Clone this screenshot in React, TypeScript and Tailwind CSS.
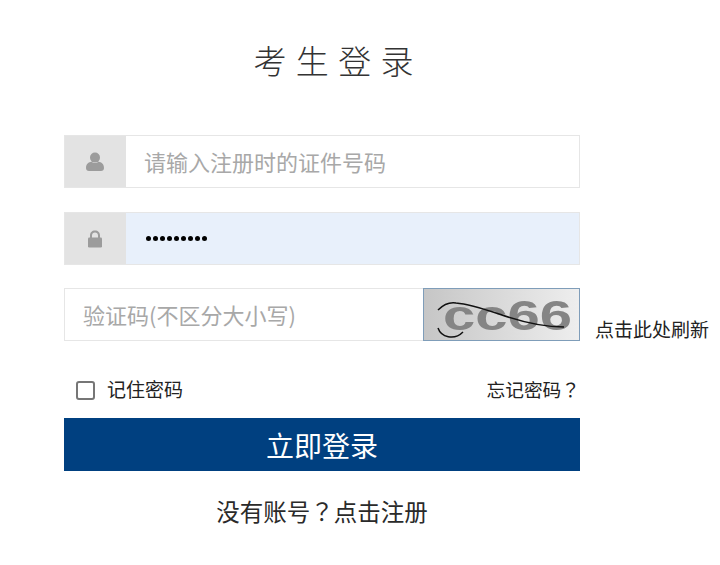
import React from 'react';

function UserIcon() {
  return (
    <svg width="20" height="20" viewBox="0 0 20 20" fill="#9c9c9c">
      <ellipse cx="10" cy="5.6" rx="5" ry="5" />
      <path d="M1 16c0-4 2.600-6 5.500-6.200 1 .9 2.200 1.300 3.500 1.300s2.500-.4 3.500-1.300C16.400 10 19 12 19 16c0 2-1.200 3-3 3H4c-1.800 0-3-1-3-3z" />
    </svg>
  );
}

function LockIcon() {
  return (
    <svg width="16" height="18" viewBox="0 0 16 18" fill="#9c9c9c">
      <path d="M3 8V5.500C3 2.500 5 .5 8 .5s5 2 5 5V8h-2V5.500C11 3.700 9.800 2.500 8 2.500S5 3.700 5 5.500V8z" />
      <rect x="1" y="7.500" width="14" height="10" rx="1.200" />
    </svg>
  );
}

function Captcha() {
  return (
    <svg width="155" height="51" viewBox="0 0 155 51" className="block">
      <defs>
        <linearGradient id="captchaBg" x1="0" x2="1" y1="0" y2="0">
          <stop offset="0" stopColor="#c6c6c6" />
          <stop offset="0.45" stopColor="#d8d8d8" />
          <stop offset="1" stopColor="#eeeeee" />
        </linearGradient>
      </defs>
      <rect width="155" height="51" fill="url(#captchaBg)" />
      <text
        x="19"
        y="41"
        fontFamily="Liberation Sans"
        fontWeight="700"
        fontSize="42"
        fill="#858585"
        textLength="129"
        lengthAdjust="spacingAndGlyphs"
      >
        cc66
      </text>
      <path d="M14 21C20 15 26 13 32 14C44 15 60 20 75 25C92 31 118 38 140 38" fill="none" stroke="#111" strokeWidth="1.500" />
      <path d="M14 39C17 48 30 52 39 43" fill="none" stroke="#111" strokeWidth="1.500" />
    </svg>
  );
}

export default function App() {
  return (
    <div className="h-[565px] w-[720px] overflow-hidden bg-white pl-16 font-['Noto_Sans_CJK_SC','Liberation_Sans',sans-serif] text-[#333]">
      <h1 className="h-[135px] w-[540px] pt-[37px] text-center text-[33px] leading-[46px] font-light tracking-[1px] text-[#333]">
        考 生 登 录
      </h1>

      <div className="flex h-[53px] w-[516px] border border-[#e6e6e6]">
        <div className="flex w-[61px] items-center justify-center bg-[#e3e3e3] pr-[2px]">
          <UserIcon />
        </div>
        <div className="flex-1 pl-[18px] text-[22px] leading-[51px] font-normal text-[#a8a8a8]">请输入注册时的证件号码</div>
      </div>

      <div className="mt-6 flex h-[53px] w-[516px] border border-[#e6e6e6]">
        <div className="flex w-[61px] items-center justify-center bg-[#e3e3e3] pr-[2px]">
          <LockIcon />
        </div>
        <div className="flex flex-1 items-center gap-[2px] bg-[#e8f0fb] pl-5">
          {Array.from({ length: 9 }).map((_, i) => (
            <span key={i} className="h-[5px] w-[5px] rounded-full bg-black" />
          ))}
        </div>
      </div>

      <div className="mt-[23px] flex w-[660px] items-end">
        <div className="h-[53px] w-[359px] border border-r-0 border-[#e6e6e6] pl-[18px] text-[22px] leading-[51px] font-normal text-[#a8a8a8]">
          验证码(不区分大小写)
        </div>
        <div className="h-[53px] w-[157px] border border-[#7f9db9]">
          <Captcha />
        </div>
        <span className="ml-[15px] text-[19px] leading-[24px] font-normal text-[#222]">点击此处刷新</span>
      </div>

      <div className="mt-[36px] flex h-[24px] w-[516px] items-center justify-between text-[19px] font-normal text-[#222]">
        <label className="flex items-center">
          <span className="mt-[2px] ml-3 h-[19px] w-[19px] rounded-[3px] border-2 border-[#767676] bg-white" />
          <span className="ml-[12px]">记住密码</span>
        </label>
        <span className="text-[18.700px]">
          忘记密码<span className="font-['Noto_Sans_CJK_TC',sans-serif]">？</span>
        </span>
      </div>

      <button className="mt-[17px] block h-[53px] w-[516px] bg-[#004080] text-[28px] font-normal text-white">立即登录</button>

      <div className="mt-[24px] w-[516px] text-center text-[23.500px] leading-[32px] font-normal text-[#2a2a2a]">
        没有账号<span className="font-['Noto_Sans_CJK_TC',sans-serif]">？</span>点击注册
      </div>
    </div>
  );
}
